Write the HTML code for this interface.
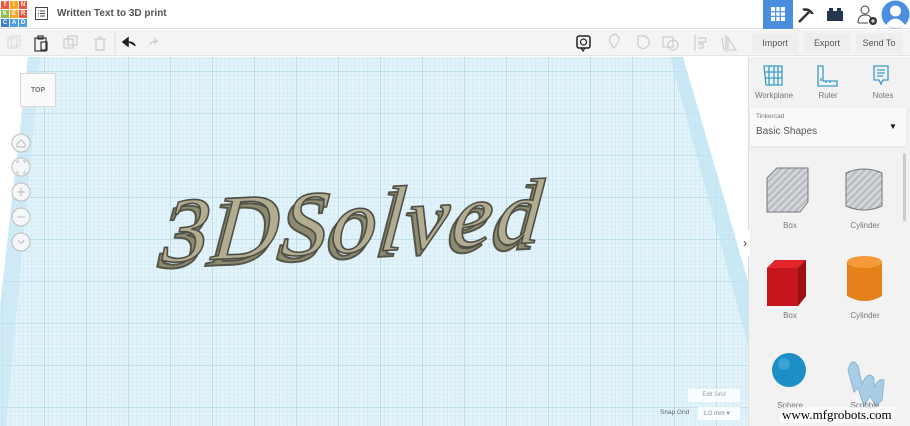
<!DOCTYPE html>
<html><head><meta charset="utf-8"><style>
*{margin:0;padding:0;box-sizing:border-box}
body{width:910px;height:426px;overflow:hidden;font-family:"Liberation Sans",sans-serif;background:#fff;position:relative}
.abs{position:absolute}
.lbl{font-size:8px;color:#777;text-align:center}
</style></head><body>
<div class="abs" style="left:0;top:0;width:910px;height:29px;background:#fff;border-bottom:1px solid #e2e2e2"></div>
<div class="abs" style="left:1px;top:1px;display:grid;grid-template-columns:repeat(3,8px);gap:1px;font-size:6px;font-weight:bold;color:#fff;text-align:center;line-height:8px">
<span style="background:#e9573f">T</span><span style="background:#f6a623">I</span><span style="background:#e9573f">N</span>
<span style="background:#8cc152">K</span><span style="background:#f6a623">E</span><span style="background:#e9573f">R</span>
<span style="background:#3b7dd8">C</span><span style="background:#4a9fe0">A</span><span style="background:#4a9fe0">D</span></div>
<svg class="abs" style="left:35px;top:7px" width="13" height="13"><rect x="0.5" y="0.5" width="12" height="12" fill="none" stroke="#444"/><path d="M3 4h1M5 4h5M3 6.5h1M5 6.5h5M3 9h1M5 9h5" stroke="#444"/></svg>
<div class="abs" style="left:57px;top:8px;font-size:10px;color:#555;font-weight:bold">Written Text to 3D print</div>
<div class="abs" style="left:763px;top:0;width:30px;height:29px;background:#4a8ee0"></div>
<svg class="abs" style="left:771px;top:7px" width="14" height="14"><rect width="14" height="14" fill="#fff"/><path d="M4.7 0v14M9.3 0v14M0 4.7h14M0 9.3h14" stroke="#4a8ee0" stroke-width="1.2"/></svg>
<svg class="abs" style="left:796px;top:5px" width="20" height="20"><path d="M3 17L13 7" stroke="#333" stroke-width="2.5"/><path d="M6 4Q13 1 18 9L15 9Q12 5 8 6Z" fill="#333"/></svg>
<svg class="abs" style="left:826px;top:7px" width="18" height="14"><rect x="1" y="4" width="16" height="10" fill="#25364f"/><rect x="3" y="1" width="4" height="4" fill="#25364f"/><rect x="11" y="1" width="4" height="4" fill="#25364f"/></svg>
<svg class="abs" style="left:857px;top:4px" width="22" height="22"><circle cx="8" cy="6" r="4" fill="none" stroke="#444"/><path d="M1 19Q1 11 8 11Q13 11 14 14M1 19h10" fill="none" stroke="#444"/><circle cx="16" cy="17" r="4" fill="#333"/><path d="M14 17h4M16 15v4" stroke="#fff"/></svg>
<svg class="abs" style="left:881px;top:0" width="29" height="29"><circle cx="14.5" cy="14.5" r="14" fill="#4a8ee0"/><circle cx="14.5" cy="11" r="5.5" fill="#fff"/><path d="M5 25Q14.5 12 24 25Q14.5 31 5 25Z" fill="#fff"/></svg>
<div class="abs" style="left:0;top:30px;width:910px;height:26px;background:#f4f4f4;border-bottom:1px solid #e4e4e4"></div>
<svg class="abs" style="left:0;top:30px" width="750" height="26" fill="none" stroke-width="1.2">
<rect x="8" y="8" width="9" height="10" stroke="#ddd"/><rect x="11" y="6" width="9" height="10" stroke="#ddd"/>
<rect x="35" y="8" width="11" height="13" stroke="#333"/><rect x="38" y="6" width="5" height="3" stroke="#333"/><rect x="41" y="12" width="6" height="8" stroke="#333"/>
<rect x="64" y="9" width="9" height="9" stroke="#ccc"/><rect x="68" y="6" width="9" height="9" stroke="#ccc"/>
<path d="M94 9h12M96 9v11h8V9M98 7h4" stroke="#ccc"/>
<line x1="115" y1="2" x2="115" y2="24" stroke="#e0e0e0"/>
<path d="M123 12L128 8V16ZM128 12Q134 12 135 16" stroke="#222" fill="#222" stroke-width="1.5"/>
<path d="M150 15Q151 11 157 11M154 8l3 3-3 3" stroke="#ccc"/>
<rect x="577" y="6" width="13" height="12" rx="2" stroke="#222" stroke-width="1.5"/><circle cx="583.5" cy="12" r="3" stroke="#222"/><path d="M581 18l2 3 2-3" stroke="#222"/>
<path d="M614 18Q607 10 611 6Q616 2 619 8Q619 12 614 18Z" stroke="#ccc"/>
<path d="M638 6h6q6 2 5 8-3 6-8 4l-3-2z" stroke="#ccc"/>
<rect x="663" y="7" width="10" height="10" stroke="#ccc"/><circle cx="673" cy="15" r="5" stroke="#ccc"/>
<path d="M695 5v16M698 8h8v4h-8M698 14h5v4h-5" stroke="#ccc"/>
<path d="M724 20L722 8M726 5v17M728 8l8 12h-8z" stroke="#ccc"/>
</svg>
<div class="abs" style="left:752px;top:33px;width:46px;height:20px;font-size:9px;color:#555;text-align:center;line-height:20px;background:#eee">Import</div>
<div class="abs" style="left:804px;top:33px;width:46px;height:20px;font-size:9px;color:#555;text-align:center;line-height:20px;background:#eee">Export</div>
<div class="abs" style="left:856px;top:33px;width:46px;height:20px;font-size:9px;color:#555;text-align:center;line-height:20px;background:#eee">Send To</div>
<svg class="abs" style="left:0;top:57px" width="748" height="369">
<defs>
<pattern id="f" width="4.2" height="4.2" patternUnits="userSpaceOnUse"><rect width="4.2" height="4.2" fill="#e3f3fa"/><path d="M0 0H4.2M0 0V4.2" stroke="#b9dfee" stroke-width="0.5"/></pattern>
<pattern id="c" width="42" height="42" patternUnits="userSpaceOnUse" patternTransform="translate(2 14)"><rect width="42" height="42" fill="url(#f)"/><path d="M0 0H42M0 0V42" stroke="#8ec3d8" stroke-width="0.8"/></pattern>
</defs>
<polygon points="28,0 683,0 790,369 0,369 0,250" fill="url(#c)"/>
<polygon points="28,0 40,0 6,369 0,369 0,250" fill="#c3e6f3" opacity="0.6"/>
<polygon points="670,0 683,0 790,369 770,369" fill="#bfe4f2" opacity="0.7"/>
<g transform="translate(355 165) rotate(-3) skewX(-8)">
<text x="0" y="30" text-anchor="middle" font-family="Liberation Serif,serif" font-style="italic" font-size="92" fill="#8c8a70" stroke="#55554a" stroke-width="2" letter-spacing="3" transform="translate(-4 6)">3DSolved</text>
<text x="0" y="30" text-anchor="middle" font-family="Liberation Serif,serif" font-style="italic" font-size="92" fill="#b2ad90" stroke="#4d4d45" stroke-width="1.6" letter-spacing="3">3DSolved</text>
</g>
</svg>
<div class="abs" style="left:20px;top:73px;width:36px;height:34px;background:#fafafa;border:1px solid #d8d8d8;font-size:7px;color:#777;text-align:center;line-height:33px;font-weight:bold">TOP</div>
<svg class="abs" style="left:10px;top:132px" width="22" height="122" fill="none" stroke="#bbb">
<circle cx="11" cy="11" r="9" fill="#f3f7f9"/><circle cx="11" cy="35" r="9" fill="#f3f7f9"/><circle cx="11" cy="60" r="9" fill="#f3f7f9"/><circle cx="11" cy="85" r="9" fill="#f3f7f9"/><circle cx="11" cy="110" r="9" fill="#f3f7f9"/>
<path d="M7 12l4-4 4 4v3H7z M7 31v-2h2M13 29h2v2M15 39v2h-2M9 41H7v-2M7 60h8M11 56v8M7 85h8M8 108q3 6 6 0"/>
</svg>
<div class="abs" style="left:688px;top:389px;width:52px;height:13px;background:rgba(255,255,255,.8);font-size:6px;color:#999;text-align:center;line-height:13px">Edit Grid</div>
<div class="abs" style="left:660px;top:409px;font-size:6.5px;color:#666">Snap Grid</div>
<div class="abs" style="left:698px;top:407px;width:42px;height:13px;background:rgba(255,255,255,.8);font-size:6.5px;color:#888;line-height:13px;padding-left:5px">1.0 mm ▾</div>
<div class="abs" style="left:748px;top:57px;width:162px;height:369px;background:#f2f2f2;border-left:1px solid #e0e0e0"></div>
<svg class="abs" style="left:760px;top:63px" width="140" height="26" fill="none" stroke="#3a9cc7" stroke-width="1.3">
<path d="M4 3h18v19H6zM9 3v19M14 3v19M18 3v19M5 9h17M5 15h17" />
<path d="M58 3h5v15h14v5H58z M61 18v-3M66 18v2M70 18v2"/>
<path d="M114 3h14v14h-5l-2 4-2-4h-5zM117 7h8M117 10h8M117 13h6"/>
</svg>
<div class="abs lbl" style="left:752px;top:91px;width:44px">Workplane</div>
<div class="abs lbl" style="left:808px;top:91px;width:40px">Ruler</div>
<div class="abs lbl" style="left:864px;top:91px;width:38px">Notes</div>
<div class="abs" style="left:750px;top:108px;width:156px;height:38px;background:#fafafa;border-radius:2px;box-shadow:0 1px 2px #ddd"></div>
<div class="abs" style="left:756px;top:113px;font-size:6.5px;color:#777">Tinkercad</div>
<div class="abs" style="left:756px;top:126px;font-size:10px;color:#555">Basic Shapes</div>
<div class="abs" style="left:889px;top:122px;font-size:8px;color:#111">▼</div>
<div class="abs" style="left:903px;top:153px;width:3px;height:68px;background:#ccc;border-radius:2px"></div>
<div class="abs" style="left:740px;top:230px;width:10px;height:26px;background:#fff;font-size:12px;line-height:26px;text-align:center;color:#333">›</div>
<svg class="abs" style="left:760px;top:160px" width="140" height="260">
<defs><pattern id="s" width="5" height="5" patternUnits="userSpaceOnUse" patternTransform="rotate(45)"><rect width="5" height="5" fill="#d5d8dc"/><rect width="2.5" height="5" fill="#b9bdc2"/></pattern></defs>
<path d="M7 18L17 8H48V42L40 52H7Z" fill="url(#s)" stroke="#777"/>
<path d="M86 13Q104 5 122 13V46Q104 54 86 46Z" fill="url(#s)" stroke="#777"/>
<path d="M7 108L15 100H46V136L38 146H7Z" fill="#c4161c"/><path d="M7 108L15 100H46L38 108Z" fill="#e0262b"/><path d="M38 108L46 100V136L38 146Z" fill="#9a1014"/>
<path d="M87 102Q105 94 122 102V136Q105 146 87 136Z" fill="#e6801a"/><ellipse cx="104.5" cy="102" rx="17.5" ry="6" fill="#f39b38"/>
<circle cx="29" cy="210" r="17" fill="#1d8fc6"/><circle cx="24" cy="204" r="6" fill="#4fb2e0" opacity=".6"/>
<path d="M88 210q4-14 10-4l4 18q6-14 12-6v10q4-10 10-8l-2 20-6 6-6-10-6 10-6-18-4 4z" fill="#a9cde6" stroke="#8bb6d3"/>
</svg>
<div class="abs lbl" style="left:770px;top:221px;width:40px">Box</div>
<div class="abs lbl" style="left:840px;top:221px;width:50px">Cylinder</div>
<div class="abs lbl" style="left:770px;top:311px;width:40px">Box</div>
<div class="abs lbl" style="left:840px;top:311px;width:50px">Cylinder</div>
<div class="abs lbl" style="left:768px;top:401px;width:44px">Sphere</div>
<div class="abs lbl" style="left:840px;top:401px;width:50px">Scribble</div>
<div class="abs" style="left:780px;top:407px;font-family:'Liberation Serif',serif;font-size:13px;color:#000;background:rgba(255,255,255,.7);padding:0 2px">www.mfgrobots.com</div>
</body></html>
